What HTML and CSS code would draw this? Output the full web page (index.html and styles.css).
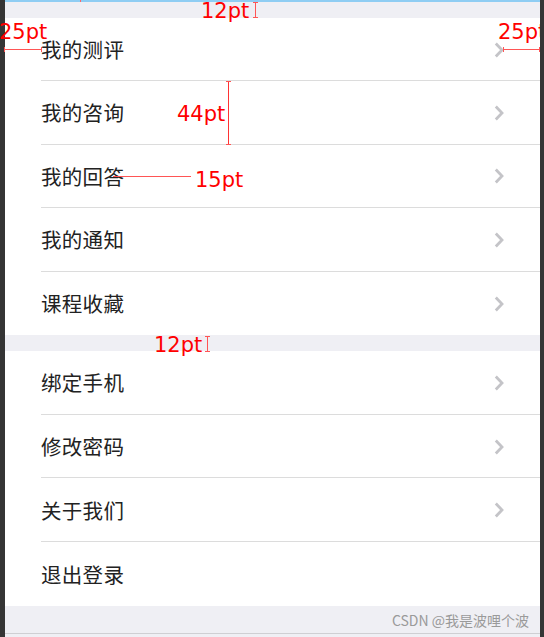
FILE: index.html
```html
<!DOCTYPE html>
<html lang="zh">
<head>
<meta charset="utf-8">
<link rel="stylesheet" href="styles.css">
</head>
<body>
<div class="frame">
  <div class="edge-left"></div>
  <div class="screen">
    <div class="topline"></div>
    <div class="gap"></div>
    <ul class="group group-a">
      <li class="row"><div class="inner"><span class="label">我的测评</span><svg class="chev" width="10" height="16" viewBox="0 0 10 16"><polyline points="1.8,1.5 8,8 1.8,14.5" fill="none" stroke="#c4c4c8" stroke-width="2.8"/></svg></div></li>
      <li class="row"><div class="inner"><span class="label">我的咨询</span><svg class="chev" width="10" height="16" viewBox="0 0 10 16"><polyline points="1.8,1.5 8,8 1.8,14.5" fill="none" stroke="#c4c4c8" stroke-width="2.8"/></svg></div></li>
      <li class="row"><div class="inner"><span class="label">我的回答</span><svg class="chev" width="10" height="16" viewBox="0 0 10 16"><polyline points="1.8,1.5 8,8 1.8,14.5" fill="none" stroke="#c4c4c8" stroke-width="2.8"/></svg></div></li>
      <li class="row"><div class="inner"><span class="label">我的通知</span><svg class="chev" width="10" height="16" viewBox="0 0 10 16"><polyline points="1.8,1.5 8,8 1.8,14.5" fill="none" stroke="#c4c4c8" stroke-width="2.8"/></svg></div></li>
      <li class="row"><div class="inner"><span class="label">课程收藏</span><svg class="chev" width="10" height="16" viewBox="0 0 10 16"><polyline points="1.8,1.5 8,8 1.8,14.5" fill="none" stroke="#c4c4c8" stroke-width="2.8"/></svg></div></li>
    </ul>
    <div class="gap"></div>
    <ul class="group group-b">
      <li class="row"><div class="inner"><span class="label">绑定手机</span><svg class="chev" width="10" height="16" viewBox="0 0 10 16"><polyline points="1.8,1.5 8,8 1.8,14.5" fill="none" stroke="#c4c4c8" stroke-width="2.8"/></svg></div></li>
      <li class="row"><div class="inner"><span class="label">修改密码</span><svg class="chev" width="10" height="16" viewBox="0 0 10 16"><polyline points="1.8,1.5 8,8 1.8,14.5" fill="none" stroke="#c4c4c8" stroke-width="2.8"/></svg></div></li>
      <li class="row"><div class="inner"><span class="label">关于我们</span><svg class="chev" width="10" height="16" viewBox="0 0 10 16"><polyline points="1.8,1.5 8,8 1.8,14.5" fill="none" stroke="#c4c4c8" stroke-width="2.8"/></svg></div></li>
      <li class="row"><div class="inner"><span class="label">退出登录</span></div></li>
    </ul>
    <div class="footer"><span class="credit">CSDN @我是波哩个波</span></div>
    <div class="bottomline"></div>
  </div>
  <div class="edge-right"></div>

  <!-- measurement annotations -->
  <div class="mark tick-top"></div>
  <span class="note n-12a">12pt</span>
  <div class="ibeam ib-a"></div>
  <span class="note n-25l">25pt</span>
  <div class="hline hl-25l"></div>
  <span class="note n-25r">25pt</span>
  <div class="hline hl-25r"></div>
  <span class="note n-44">44pt</span>
  <div class="vline vl-44"></div>
  <span class="note n-15">15pt</span>
  <div class="hline15"></div>
  <span class="note n-12b">12pt</span>
  <div class="ibeam ib-b"></div>
</div>
</body>
</html>
```
FILE: styles.css
```css
* { box-sizing: border-box; }
html, body { margin: 0; padding: 0; }
body {
  width: 544px;
  height: 637px;
  overflow: hidden;
  background: #f4f4f7;
  font-family: "Noto Sans CJK SC", "Noto Sans", sans-serif;
}
.frame {
  position: relative;
  display: flex;
  width: 544px;
  height: 637px;
}
.edge-left { width: 5px; background: #353535; flex: none; }
.edge-right {
  width: 4px;
  background: #353535;
  flex: none;
  position: relative;
  z-index: 2;
}
.screen {
  flex: 1;
  display: flex;
  flex-direction: column;
  background: #efeff4;
}
.topline { height: 2px; background: #8fcdf3; }
.gap { height: 16px; background: #efeff4; flex: none; }
.group {
  list-style: none;
  margin: 0;
  padding: 0;
  background: #fff;
}
.row { padding-left: 36px; }
.group-a .row { height: 63.4px; }
.group-b .row { height: 63.75px; }
.inner {
  height: 100%;
  display: flex;
  align-items: center;
  justify-content: space-between;
  padding-right: 36px;
  border-bottom: 1px solid #dcdcdc;
}
.row:last-child .inner { border-bottom: none; }
.label {
  font-size: 20.5px;
  color: #222;
  line-height: 1;
  letter-spacing: 0.3px;
}
.chev { display: block; margin-top: 1px; }
.footer {
  height: 27px;
  background: #efeff4;
  display: flex;
  align-items: center;
  justify-content: flex-end;
  padding-right: 11px;
}
.credit {
  font-size: 14px;
  color: #9a9a9a;
  line-height: 1;
  margin-top: 2px;
}
.bottomline { height: 1px; background: #cfcfd3; }

/* annotations */
.note {
  position: absolute;
  z-index: 1;
  color: #f00;
  font-family: "DejaVu Sans", sans-serif;
  font-size: 21px;
  line-height: 1;
}
.n-12a { left: 201px; top: 1px; }
.n-25l { left: -1px; top: 22px; }
.n-25r { left: 498px; top: 22px; }
.n-44 { left: 177px; top: 104px; }
.n-15 { left: 195px; top: 170px; }
.n-12b { left: 154px; top: 335px; }
.mark { position: absolute; background: #f66; }
.tick-top { left: 80px; top: 0; width: 1px; height: 2px; }
.ibeam {
  position: absolute;
  width: 5px;
  border-top: 1px solid #f55;
  border-bottom: 1px solid #f55;
}
.ibeam::after {
  content: "";
  position: absolute;
  left: 2px;
  top: 0;
  bottom: 0;
  width: 1px;
  background: #f55;
}
.ib-a { left: 253px; top: 2px; height: 16px; }
.ib-b { left: 205px; top: 336px; height: 16px; }
.hline {
  position: absolute;
  height: 5px;
  border-left: 1px solid #f55;
  border-right: 1px solid #f55;
}
.hline::after {
  content: "";
  position: absolute;
  left: 0;
  right: 0;
  top: 2px;
  height: 1px;
  background: #f55;
}
.hl-25l { left: 4px; top: 47px; width: 38px; }
.hl-25r { left: 503px; top: 47px; width: 37px; }
.vline {
  position: absolute;
  width: 5px;
  border-top: 1px solid #f55;
  border-bottom: 1px solid #f55;
}
.vline::after {
  content: "";
  position: absolute;
  left: 2px;
  top: 0;
  bottom: 0;
  width: 1px;
  background: #f33;
}
.vl-44 { left: 226px; top: 81px; height: 64px; }
.hline15 {
  position: absolute;
  left: 113px;
  top: 176px;
  width: 78px;
  height: 1px;
  background: #f55;
}
```
